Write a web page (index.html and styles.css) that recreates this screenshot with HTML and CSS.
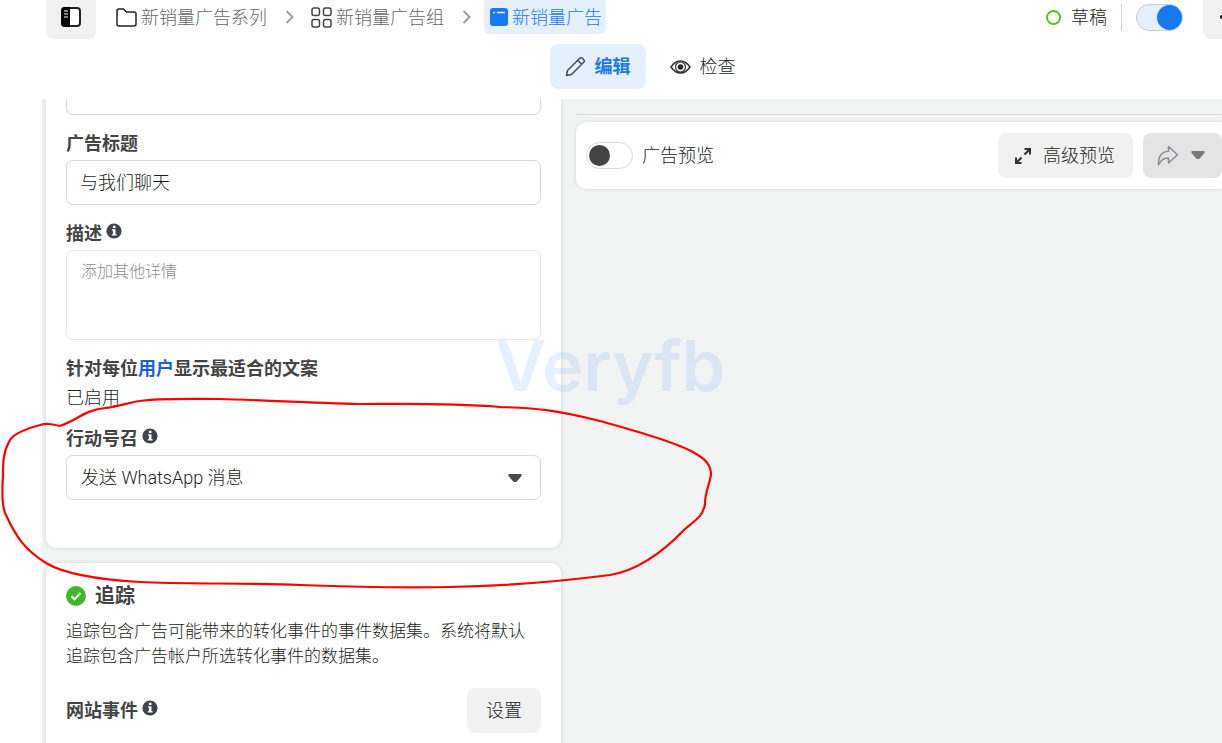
FILE: index.html
```html
<!DOCTYPE html>
<html lang="zh-CN">
<head>
<meta charset="utf-8">
<title>新销量广告</title>
<link rel="stylesheet" href="styles.css">
</head>
<body>
<svg class="defs" width="0" height="0" aria-hidden="true">
  <symbol id="info" viewBox="0 0 16 16"><circle cx="8" cy="8" r="7.6" fill="#3f434a"/><path d="M6.900 2.800h2.600v2.100H6.900zM6 6.300h3.500v5h1.100v1.300H5.800v-1.300h1.100V7.600H6z" fill="#fff"/></symbol>
  <symbol id="chev" viewBox="0 0 10 16"><path d="M1.500 2l6 6-6 6" fill="none" stroke="#98a0ab" stroke-width="2"/></symbol>
  <symbol id="caret" viewBox="0 0 14 9"><path d="M.5 0h13v2L9 7.200Q7 9 5 7.200L.5 2z" fill="currentColor"/></symbol>
</svg>
<header class="header">
  <div class="topbar">
    <button class="panel-btn" aria-label="侧栏">
      <svg width="20" height="20" viewBox="0 0 20 20"><rect x="1" y="1" width="18" height="18" rx="3" fill="#fff" stroke="#222" stroke-width="2"/><path d="M4 0h5v20H4q-4 0-4-4V4q0-4 4-4z" fill="#000"/><path d="M3 4h4M3 7h4M3 10h4" stroke="#fff"/></svg>
    </button>
    <nav class="crumbs">
      <a class="crumb" href="#"><svg width="21" height="19" viewBox="0 0 21 19"><path d="M1 16V3q0-2 2-2h4.500l3 3H18q2 0 2 2v10q0 2-2 2H3q-2 0-2-2z" fill="none" stroke="#222" stroke-width="1.500"/></svg>新销量广告系列</a>
      <svg class="chev" width="10" height="16"><use href="#chev"/></svg>
      <a class="crumb" href="#"><svg width="21" height="21" viewBox="0 0 21 21" fill="none" stroke="#444" stroke-width="1.500"><rect x="1" y="1" width="7.500" height="7.500" rx="2"/><rect x="12.500" y="1" width="7.500" height="7.500" rx="2"/><rect x="1" y="12.500" width="7.500" height="7.500" rx="2"/><rect x="12.500" y="12.500" width="7.500" height="7.500" rx="2"/></svg>新销量广告组</a>
      <svg class="chev" width="10" height="16"><use href="#chev"/></svg>
      <a class="crumb current" href="#" aria-current="page"><svg width="18" height="18" viewBox="0 0 18 18"><rect width="18" height="18" rx="3" fill="#1877f2"/><path d="M3 4.500h2M7 4.500h8" stroke="#e5f0fd" stroke-width="1.300"/></svg>新销量广告</a>
    </nav>
    <div class="status">
      <span class="dot"></span><span>草稿</span><span class="rule"></span>
      <input class="switch" type="checkbox" checked aria-label="启用广告">
      <button class="more" aria-label="更多"><svg width="16" height="4" viewBox="0 0 16 4"><circle cx="2" cy="2" r="2"/><circle cx="8" cy="2" r="2"/><circle cx="14" cy="2" r="2"/></svg></button>
    </div>
  </div>
  <div class="tabs">
    <button class="tab active"><svg width="21" height="21" viewBox="0 0 21 21" fill="none" stroke="#444b55" stroke-width="1.500" stroke-linejoin="round"><path d="M1.500 19.500l1-5L14.700 2.300q1.300-1.300 2.600 0l1.400 1.400q1.300 1.300 0 2.600L6.500 18.500zM12.700 4.300l4 4"/></svg>编辑</button>
    <button class="tab"><svg width="21" height="14" viewBox="0 0 21 14"><path d="M1 7q4-6 9.500-6T20 7q-4 6-9.500 6T1 7z" fill="none" stroke="#333" stroke-width="1.500"/><circle cx="10.500" cy="7" r="5" fill="none" stroke="#333" stroke-width="1.200"/><circle cx="10.500" cy="7" r="2.800" fill="#222"/></svg>检查</button>
  </div>
</header>
<main class="main">
  <section class="editor">
    <form class="card copy">
      <input class="box clipped" aria-label="正文">
      <label class="label" for="title">广告标题</label>
      <input class="box" id="title" value="与我们聊天">
      <div class="label"><label for="desc">描述</label><svg width="16" height="16"><use href="#info"/></svg></div>
      <textarea class="box area" id="desc" placeholder="添加其他详情"></textarea>
      <div class="label"><span>针对每位<a href="#">用户</a>显示最适合的文案</span></div>
      <p class="enabled">已启用</p>
      <div class="label"><label for="cta">行动号召</label><svg width="16" height="16"><use href="#info"/></svg></div>
      <div class="select-wrap">
        <select class="box" id="cta"><option>发送 WhatsApp 消息</option></select>
        <svg class="caret" width="14" height="9"><use href="#caret"/></svg>
      </div>
    </form>
    <section class="card tracking">
      <h2><svg width="20" height="20" viewBox="0 0 20 20"><circle cx="10" cy="10" r="10" fill="#42b72a"/><path d="M5.500 10.300l3 3 6-6.300" fill="none" stroke="#fff" stroke-width="2"/></svg>追踪</h2>
      <p>追踪包含广告可能带来的转化事件的事件数据集。系统将默认追踪包含广告帐户所选转化事件的数据集。</p>
      <div class="row">
        <div class="label">网站事件<svg width="16" height="16"><use href="#info"/></svg></div>
        <button class="btn">设置</button>
      </div>
    </section>
  </section>
  <section class="preview">
    <div class="preview-bar">
      <label class="preview-toggle"><input class="switch" type="checkbox">广告预览</label>
      <button class="btn"><svg width="16" height="16" viewBox="0 0 16 16"><path d="M9.500 1H15v5.500M1 9.500V15h5.500" fill="none" stroke="#333" stroke-width="2"/><path d="M15 1L9.500 6.500M1 15l5.500-5.500" stroke="#333" stroke-width="2.200"/></svg>高级预览</button>
      <button class="btn share" aria-label="分享"><svg width="22" height="21" viewBox="0 0 22 21"><path d="M1.500 20Q1 7 11.500 6.300V1.500l9 8.300-9 8.200v-5Q5 12.500 1.500 20z" fill="none" stroke="#8a8d91" stroke-width="1.500" stroke-linejoin="round"/></svg><svg width="14" height="9"><use href="#caret"/></svg></button>
    </div>
  </section>
</main>
<div class="watermark">Veryfb</div>
<svg class="annotation" width="720" height="200" viewBox="0 395 720 200" aria-hidden="true"><path d="M60 426C51 424 47 423 40 425C28 428 13 434 10 440C3 452 3 462 3 475C2 490 2 508 6 515C16 537 25 550 46 563C66 575 105 580 140 582C180 584 250 583 300 585C355 587 400 588 450 587C510 586 555 582 610 575C640 570 665 550 685 529C696 520 703 516 705 504C705 490 711 482 711 473C710 462 702 457 691 451C670 440 625 428 600 421C560 411 540 408 500 407C450 403 410 404 360 404C310 403 260 400 220 399C190 399 160 398 140 401C125 403 118 407 105 408C82 411 80 419 60 426" fill="none" stroke="#f00" stroke-width="2.200"/></svg>
</body>
</html>
```

FILE: styles.css
```css
* { box-sizing: border-box; }
body {
  margin: 0;
  height: 100vh;
  display: flex;
  flex-direction: column;
  position: relative;
  overflow: hidden;
  background: #fff;
  color: #1c1e21;
  font: 300 18px/25px Roboto, "Noto Sans CJK SC", sans-serif;
}
button, input, select, textarea { font: inherit; color: inherit; margin: 0; }
button { border: 0; background: none; }
a { text-decoration: none; color: inherit; }
svg { flex: none; }
.defs { position: absolute; }

.header { flex: none; height: 99px; }
.topbar { display: flex; align-items: flex-start; padding-left: 46px; height: 44px; }
.panel-btn {
  width: 50px;
  height: 39px;
  padding: 0 0 5px;
  border-radius: 0 0 8px 8px;
  background: #f1f1f1;
  display: flex;
  align-items: center;
  justify-content: center;
}
.crumbs { display: flex; align-items: center; margin-left: 20px; height: 34px; }
.crumb { display: flex; align-items: center; gap: 4px; color: #65676b; }
.crumb.current {
  height: 34px;
  padding: 0 4px 0 6px;
  gap: 4px;
  border-radius: 0 0 6px 6px;
  background: #e5f0fd;
  color: #1877f2;
}
.chev { margin: 0 16px 0 18px; }
.chev + .current { margin-left: -4px; }
.status { display: flex; align-items: center; margin-left: auto; height: 34px; }
.dot { width: 15px; height: 15px; margin-right: 10px; border: 2px solid #5fbf0c; border-radius: 50%; }
.rule { width: 1px; height: 27px; margin: 0 14px; background: #ccd0d5; }
.more {
  display: flex;
  align-items: center;
  align-self: flex-start;
  width: 19px;
  height: 39px;
  margin-left: 20px;
  padding: 0 0 5px 17px;
  overflow: hidden;
  border-radius: 0 0 0 8px;
  background: #f1f1f1;
}

.switch {
  appearance: none;
  flex: none;
  width: 47px;
  height: 27px;
  padding: 2px;
  display: flex;
  align-items: center;
  border: 1px solid #d5d7da;
  border-radius: 14px;
  background: #fff;
}
.switch::before { content: ""; width: 21px; height: 21px; border-radius: 50%; background: #444; }
.switch:checked { padding: 0; justify-content: flex-end; background: #e5f0fd; border-color: #c3cbd6; }
.switch:checked::before { width: 25px; height: 25px; background: #1877f2; }

.tabs { display: flex; justify-content: center; gap: 9px; padding-left: 78px; }
.tab {
  display: flex;
  align-items: center;
  gap: 9px;
  height: 45px;
  padding: 0 15px;
  border-radius: 8px;
}
.tab.active { background: #e5f0fd; color: #1877f2; font-weight: 700; }

.main {
  flex: 1;
  min-height: 0;
  display: grid;
  grid-template-columns: minmax(0, 515fr) minmax(0, 646fr);
  gap: 15px;
  margin-left: 42px;
  padding-left: 4px;
  overflow: hidden;
  background: #f2f4f4;
}
.card { background: #fff; border-radius: 10px; padding: 0 20px; box-shadow: 0 0 4px #0002; }
.copy { border-radius: 0 0 10px 10px; padding-bottom: 48px; }
.box {
  display: block;
  width: 100%;
  height: 45px;
  padding: 0 14px;
  border: 1px solid #d5d7da;
  border-radius: 7px;
  background: #fff;
}
input.box { padding: 0 13px 3px; }
.clipped { height: 16px; border-top: 0; border-radius: 0 0 7px 7px; }
.label { display: flex; align-items: center; gap: 4px; font-weight: 700; color: #444; height: 45px; padding-top: 12px; }
.label a { color: #1763cf; }
.label svg { margin-bottom: 5px; }
.area { height: 90px; padding: 8px 14px; border-color: #e6e7e9; font-size: 16px; resize: none; }
.area::placeholder { color: #8a8d91; }
.enabled { margin: 0 0 -1px; height: 26px; }
.select-wrap { position: relative; }
.select-wrap .box { appearance: none; }
.caret { position: absolute; right: 19px; top: 19px; color: #444950; }

.tracking { margin-top: 15px; padding-top: 20px; height: 100%; }
.tracking h2 { display: flex; align-items: center; gap: 9px; margin: 0; font-size: 20px; line-height: 26px; color: #444; }
.tracking p { margin: 10px 0 19px; font-size: 17px; }
.row { display: flex; align-items: center; justify-content: space-between; }
.row .label { padding: 0; }
.btn {
  display: flex;
  align-items: center;
  gap: 12px;
  height: 45px;
  padding: 0 19px;
  border-radius: 8px;
  background: #f1f1f1;
}

.preview { padding-top: 15px; }
.preview::before { content: ""; display: block; height: 1px; margin-bottom: -1px; background: #d8dbe0; }
.preview-bar {
  display: flex;
  align-items: center;
  gap: 10px;
  margin-top: 8px;
  height: 67px;
  padding-left: 10px;
  border-radius: 10px 0 0 10px;
  background: #fff;
  box-shadow: 0 0 4px #0002;
}
.preview-toggle { display: flex; align-items: center; gap: 9px; margin-right: auto; }
.preview-bar .btn { padding: 0 18px 0 17px; }
.preview-bar .share { padding: 0 17px 0 14px; background: #e4e4e4; color: #77797c; }

.watermark {
  position: absolute;
  left: 495px;
  top: 324px;
  font: 600 70px/84px Inter, sans-serif;
  color: #1877f21c;
  pointer-events: none;
}
.annotation { position: absolute; left: 0; top: 395px; pointer-events: none; }
```
